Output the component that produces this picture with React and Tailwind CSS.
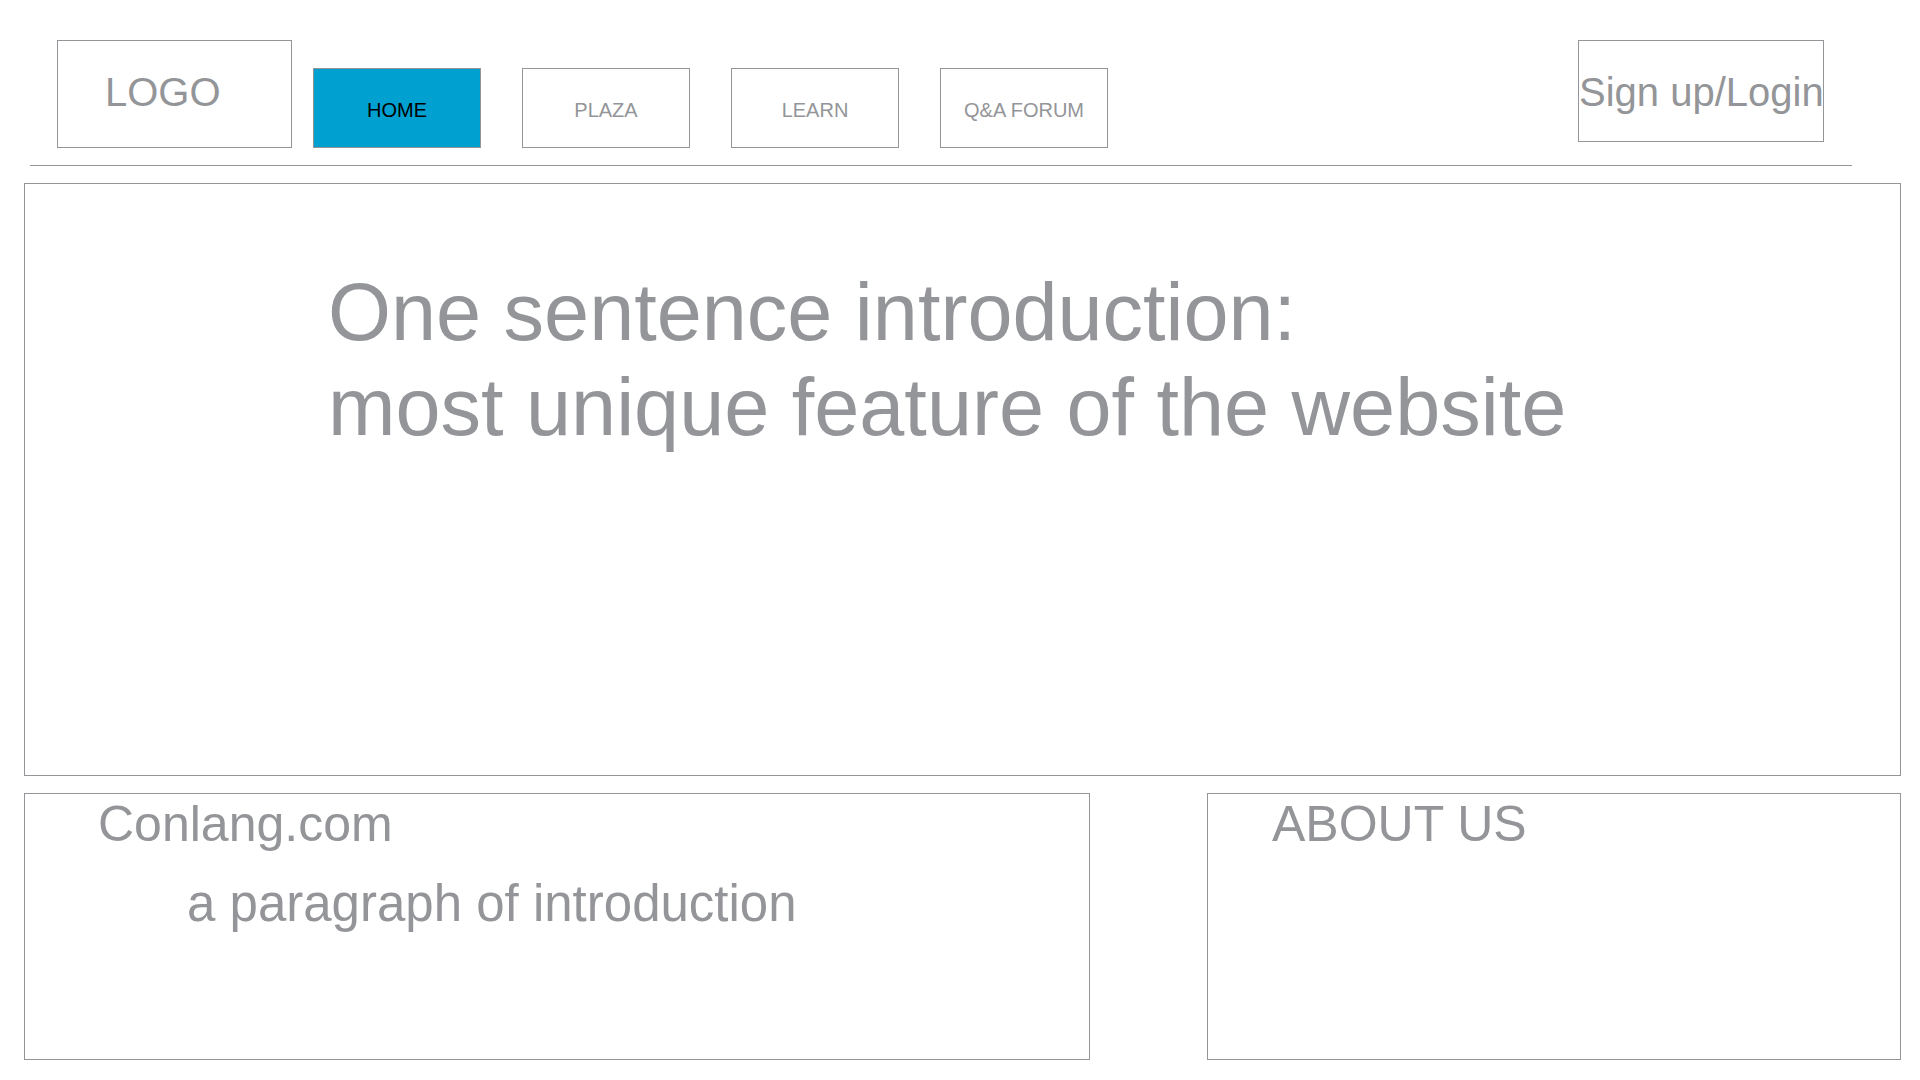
const navItems = ["HOME", "PLAZA", "LEARN", "Q&A FORUM"];

export default function App() {
  return (
    <div className="w-full h-[1080px] bg-white font-['Liberation_Sans',Arial,sans-serif] text-[#939598] overflow-hidden">
      {/* Header */}
      <div className="flex items-start pl-[57px] pt-[40px] pr-[96px]">
        <div className="w-[235px] h-[108px] border border-[#939598] pl-[47px] pt-[28px]">
          <span className="block text-[40px] leading-[46px]">LOGO</span>
        </div>
        <nav className="flex gap-[41px] ml-[21px] mt-[28px]">
          {navItems.map((item, i) => (
            <div
              key={item}
              className={`w-[168px] h-[80px] border border-[#939598] flex items-center justify-center pt-[3px] text-[20px] ${
                i === 0 ? "bg-[#00a0d0] text-black" : "bg-white text-[#939598]"
              }`}
            >
              {item}
            </div>
          ))}
        </nav>
        <div className="ml-auto w-[246px] h-[102px] border border-[#939598] pt-[28px] whitespace-nowrap">
          <span className="block text-[40px] leading-[46px]">Sign up/Login</span>
        </div>
      </div>

      <div className="ml-[30px] mt-[17px] w-[1822px] h-px bg-[#939598]" />

      {/* Hero */}
      <div className="ml-[24px] mt-[17px] w-[1877px] h-[593px] border border-[#939598] pl-[303px] pt-[81px]">
        <p className="text-[81px] leading-[95px] whitespace-nowrap">
          One sentence introduction:
          <br />
          most unique feature of the website
        </p>
      </div>

      {/* Bottom row */}
      <div className="flex ml-[24px] mt-[17px]">
        <div className="w-[1066px] h-[267px] border border-[#939598] pl-[73px] pt-[2px]">
          <h2 className="text-[50px] leading-[56px]">Conlang.com</h2>
          <p className="text-[51px] leading-[56px] mt-[24px] ml-[89px]">a paragraph of introduction</p>
        </div>
        <div className="ml-[117px] w-[694px] h-[267px] border border-[#939598] pl-[64px] pt-[2px]">
          <h2 className="text-[50px] leading-[56px]">ABOUT US</h2>
        </div>
      </div>
    </div>
  );
}
